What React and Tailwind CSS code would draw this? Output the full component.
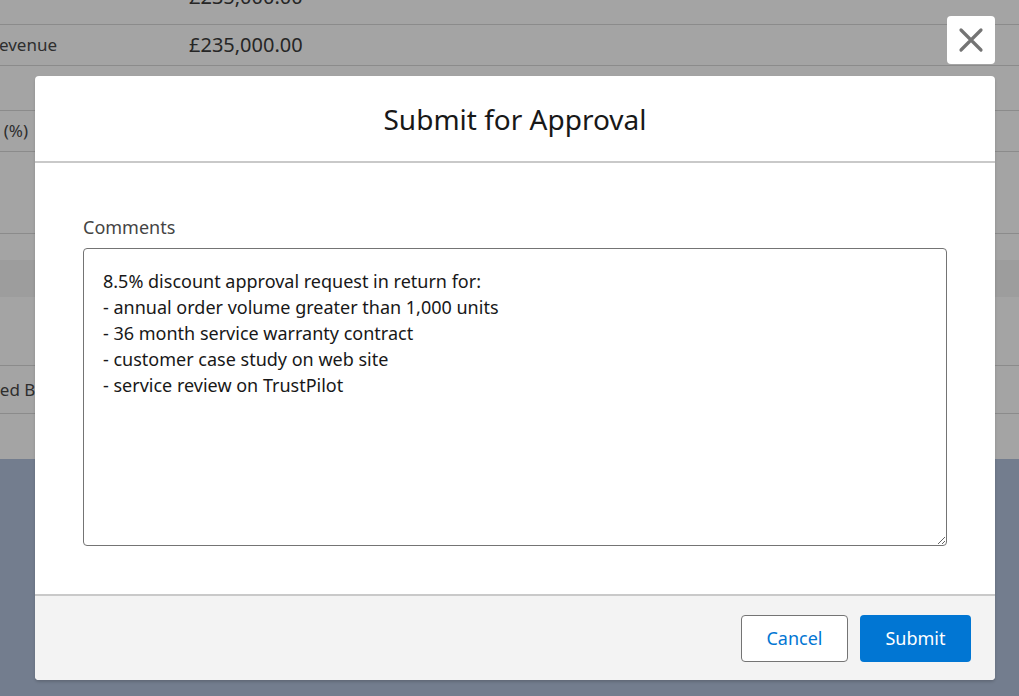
import React from 'react';

const font = { fontFamily: '"Noto Sans", "Open Sans", Arial, sans-serif' };

// Record detail rows that sit behind the dimmed backdrop; labels are
// right-aligned to a column that ends at the left edge, so they spill off-screen
const Row = ({ h, label, value, labelEnd = 'w-[57px]' }) => (
    <div className={`${h} shrink-0 border-b border-[#8b8b8b] flex items-center`}>
        <div className="w-[189px] shrink-0">
            <div className={`${labelEnd} flex justify-end`}>
                <span className="whitespace-nowrap text-[17px] text-[#2e2e2e]">{label}</span>
            </div>
        </div>
        <span className="whitespace-nowrap text-[20px] text-[#262626]">{value}</span>
    </div>
);

const CloseIcon = () => (
    <svg width="26" height="26" viewBox="0 0 26 26" fill="none" stroke="#747474" strokeWidth="3.2" strokeLinecap="round">
        <path d="M3 3L23 23M23 3L3 23" />
    </svg>
);

const comment = `8.5% discount approval request in return for:
- annual order volume greater than 1,000 units
- 36 month service warranty contract
- customer case study on web site
- service review on TrustPilot`;

export default function App() {
    return (
        <div className="relative w-[1019px] h-[696px] overflow-hidden bg-[#737d8e]" style={font}>
            {/* Page underneath */}
            <div className="bg-[#a4a4a4] h-[459px] flex flex-col">
                <div className="-mt-[30px]">
                    <Row h="h-[55px]" label="" value="£235,000.00" />
                </div>
                <Row h="h-[41px]" label="Expected Revenue" value="£235,000.00" />
                <div className="h-[45px] shrink-0 border-b border-[#8b8b8b]" />
                <Row h="h-[41px]" label="Discount (%)" labelEnd="w-[28px]" value="" />
                <div className="h-[82px] shrink-0 border-b border-[#8b8b8b]" />
                <div className="h-[132px] shrink-0 border-b border-[#8b8b8b] relative">
                    <div className="absolute left-0 right-0 top-[26px] h-[37px] bg-[#9d9d9d]" />
                </div>
                <Row h="h-[48px]" label="Approved By" labelEnd="w-[44px]" value="" />
            </div>

            {/* Modal */}
            <div className="absolute inset-0 flex flex-col items-start pl-[35px] pt-[16px]">
                <div className="w-[960px] flex justify-end">
                    <button className="w-[48px] h-[48px] bg-white rounded-[4px] flex items-center justify-center">
                        <CloseIcon />
                    </button>
                </div>
                <div className="mt-[12px] w-[960px] rounded-[4px] bg-white shadow-[0_2px_3px_0_rgba(0,0,0,0.16)] overflow-hidden">
                    <div className="h-[87px] flex items-center justify-center border-b-2 border-[#c9c9c9]">
                        <h2 className="text-[28px] text-[#181818] font-normal">Submit for Approval</h2>
                    </div>
                    <div className="px-[48px] pt-[52px] pb-[48px]">
                        <label className="block text-[18px] text-[#444444] leading-[24px] mb-[9px]">Comments</label>
                        <textarea
                            readOnly
                            defaultValue={comment}
                            className="block w-full h-[298px] border border-[#747474] rounded-[4px] px-[19px] pt-[19px] text-[18px] leading-[26px] text-[#181818] resize-y outline-none"
                            style={font}
                        />
                    </div>
                    <div className="h-[86px] bg-[#f3f3f3] border-t-2 border-[#c9c9c9] flex items-center justify-end gap-[12px] pr-[24px]">
                        <button className="w-[107px] h-[47px] rounded-[4px] border border-[#747474] bg-white text-[#0176d3] text-[18px]">Cancel</button>
                        <button className="w-[111px] h-[47px] rounded-[4px] bg-[#0176d3] text-white text-[18px]">Submit</button>
                    </div>
                </div>
            </div>
        </div>
    );
}
